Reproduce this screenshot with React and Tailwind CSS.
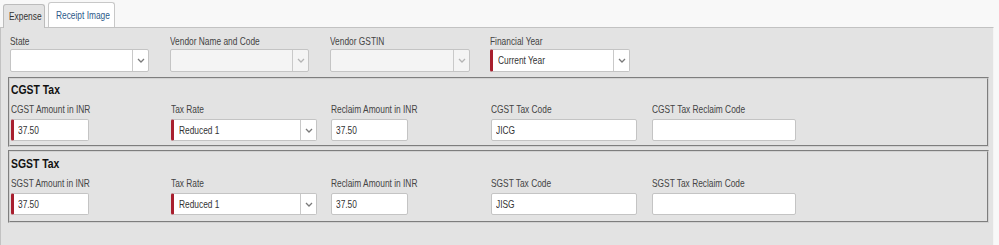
import React from "react";

const FONT = "font-['Liberation_Sans',Arial,sans-serif]";

// the source screen is horizontally squeezed, so text is narrowed
function T({ children, bold }) {
  return (
    <span className={`inline-block whitespace-nowrap origin-left ${bold ? "scale-x-[0.8]" : "scale-x-[0.76]"}`}>
      {children}
    </span>
  );
}

function Chevron({ muted }) {
  return (
    <svg width="8" height="5" viewBox="0 0 8 5" fill="none">
      <path d="M1 1 L4 4 L7 1" stroke={muted ? "#b4b4b4" : "#7a7a7a"} strokeWidth="1.3" />
    </svg>
  );
}

function Select({ value, width, required, disabled, height = "h-[23px]" }) {
  return (
    <div
      className={`flex ${height} rounded-[2px] border border-[#c4c4c4] ${disabled ? "bg-[#f4f4f4]" : "bg-white"} ${required ? "border-l-[3px] border-l-[#a81f2e]" : ""}`}
      style={{ width }}
    >
      <div className="flex-1 flex items-center pl-[5px] text-[11px] text-[#333] overflow-hidden">{value && <T>{value}</T>}</div>
      <div className="w-[16px] flex items-center justify-center border-l border-[#c9c9c9]">
        <Chevron muted={disabled} />
      </div>
    </div>
  );
}

function Input({ value, width, required }) {
  return (
    <div
      className={`flex items-center h-[22px] rounded-[2px] border border-[#c4c4c4] bg-white pl-[4px] text-[11px] text-[#333] ${required ? "border-l-[3px] border-l-[#a81f2e]" : ""}`}
      style={{ width }}
    >
      {value && <T>{value}</T>}
    </div>
  );
}

function Label({ children }) {
  return (
    <div className="h-[12px] leading-[12px] text-[11px] text-[#444]">
      <T>{children}</T>
    </div>
  );
}

function TaxBox({ name, code, top }) {
  return (
    <div className={`ml-[7px] w-[981px] border-2 [border-style:groove] border-[#d2d2d2] pl-[1px] ${top}`}>
      <div className="h-[15px] leading-[15px] text-[13px] font-bold text-[#111]">
        <T bold>{name} Tax</T>
      </div>
      <div className="flex mt-[6px]">
        <div className="w-[160px]">
          <Label>{name} Amount in INR</Label>
          <div className="mt-[4px]"><Input value="37.50" width={78} required /></div>
        </div>
        <div className="w-[160px]">
          <Label>Tax Rate</Label>
          <div className="mt-[4px]"><Select value="Reduced 1" width={146} required height="h-[22px]" /></div>
        </div>
        <div className="w-[160px]">
          <Label>Reclaim Amount in INR</Label>
          <div className="mt-[4px]"><Input value="37.50" width={77} /></div>
        </div>
        <div className="w-[161px]">
          <Label>{name} Tax Code</Label>
          <div className="mt-[4px]"><Input value={code} width={146} /></div>
        </div>
        <div className="w-[160px]">
          <Label>{name} Tax Reclaim Code</Label>
          <div className="mt-[4px]"><Input value="" width={144} /></div>
        </div>
      </div>
    </div>
  );
}

export default function App() {
  return (
    <div className={`w-[999px] h-[245px] overflow-hidden bg-[#f8f8f8] ${FONT}`}>
      {/* tabs */}
      <div className="flex items-end h-[27px] pl-[3px] gap-[3px]">
        <div className="relative z-10 -mb-px w-[42px] h-[24px] pl-[5px] flex items-center rounded-t-[3px] border border-b-0 border-[#bcbcbc] bg-[#e3e3e3] text-[11px] text-[#333]">
          <T>Expense</T>
        </div>
        <div className="w-[67px] h-[25px] pl-[7px] flex items-center rounded-t-[3px] border border-b-0 border-[#c8c8c8] bg-white text-[11px] text-[#2d5a8a]">
          <T>Receipt Image</T>
        </div>
      </div>

      {/* panel */}
      <div className="w-[994px] h-[219px] border border-[#c2c2c2] border-r-[#f4f4f4] bg-[#e3e3e3] pt-[7px]">
        <div className="flex pl-[9px]">
          <div className="w-[160px]">
            <Label>State</Label>
            <div className="mt-[2px]"><Select value="" width={139} /></div>
          </div>
          <div className="w-[160px]">
            <Label>Vendor Name and Code</Label>
            <div className="mt-[2px]"><Select value="" width={139} disabled /></div>
          </div>
          <div className="w-[160px]">
            <Label>Vendor GSTIN</Label>
            <div className="mt-[2px]"><Select value="" width={140} disabled /></div>
          </div>
          <div className="w-[160px]">
            <Label>Financial Year</Label>
            <div className="mt-[2px]"><Select value="Current Year" width={140} required /></div>
          </div>
        </div>

        <TaxBox name="CGST" code="JICG" top="mt-[5px] pt-[3px] pb-[4px]" />
        <TaxBox name="SGST" code="JISG" top="mt-[3px] pt-[4px] pb-[6px]" />
      </div>
    </div>
  );
}
